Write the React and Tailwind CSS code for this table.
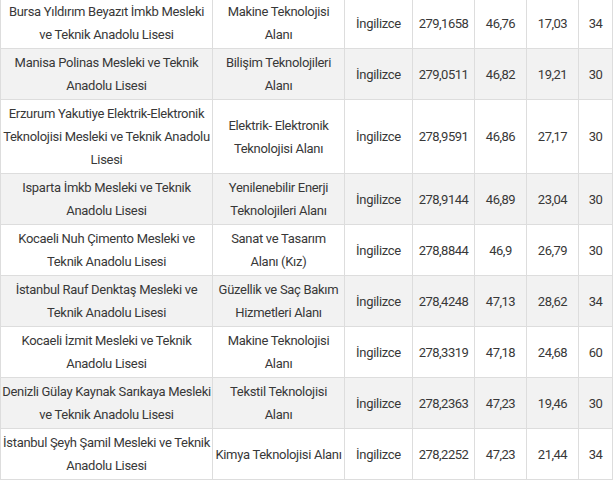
const rows = [
  [['Bursa Yıldırım Beyazıt İmkb Mesleki', 've Teknik Anadolu Lisesi'], ['Makine Teknolojisi', 'Alanı'], '279,1658', '46,76', '17,03', '34'],
  [['Manisa Polinas Mesleki ve Teknik', 'Anadolu Lisesi'], ['Bilişim Teknolojileri', 'Alanı'], '279,0511', '46,82', '19,21', '30'],
  [['Erzurum Yakutiye Elektrik-Elektronik', 'Teknolojisi Mesleki ve Teknik Anadolu', 'Lisesi'], ['Elektrik- Elektronik', 'Teknolojisi Alanı'], '278,9591', '46,86', '27,17', '30'],
  [['Isparta İmkb Mesleki ve Teknik', 'Anadolu Lisesi'], ['Yenilenebilir Enerji', 'Teknolojileri Alanı'], '278,9144', '46,89', '23,04', '30'],
  [['Kocaeli Nuh Çimento Mesleki ve', 'Teknik Anadolu Lisesi'], ['Sanat ve Tasarım', 'Alanı (Kız)'], '278,8844', '46,9', '26,79', '30'],
  [['İstanbul Rauf Denktaş Mesleki ve', 'Teknik Anadolu Lisesi'], ['Güzellik ve Saç Bakım', 'Hizmetleri Alanı'], '278,4248', '47,13', '28,62', '34'],
  [['Kocaeli İzmit Mesleki ve Teknik', 'Anadolu Lisesi'], ['Makine Teknolojisi', 'Alanı'], '278,3319', '47,18', '24,68', '60'],
  [['Denizli Gülay Kaynak Sarıkaya Mesleki', 've Teknik Anadolu Lisesi'], ['Tekstil Teknolojisi', 'Alanı'], '278,2363', '47,23', '19,46', '30'],
  [['İstanbul Şeyh Şamil Mesleki ve Teknik', 'Anadolu Lisesi'], ['Kimya Teknolojisi Alanı'], '278,2252', '47,23', '21,44', '34'],
];

const Lines = ({ lines }) => (
  <>
    {lines.map((l, i) => (
      <div key={i} className="whitespace-nowrap">{l}</div>
    ))}
  </>
);

export default function App() {
  const td = 'border border-[#dddddd] text-center align-middle py-[2px] px-0 tracking-[-0.3px]';
  const num = 'border border-[#dddddd] text-center align-middle py-[2px] px-0 tracking-[-0.5px]';
  return (
    <div className="w-[614px] h-[483px] overflow-hidden bg-white">
      <table
        className="-mt-[3px] w-[613px] border-collapse table-fixed text-[13px] leading-[23px] text-[#383838]"
        style={{ fontFamily: 'Roboto, "Noto Sans", sans-serif' }}
      >
        <colgroup>
          <col className="w-[212px]" />
          <col className="w-[132px]" />
          <col className="w-[68px]" />
          <col className="w-[62px]" />
          <col className="w-[52px]" />
          <col className="w-[52px]" />
          <col className="w-[34px]" />
        </colgroup>
        <tbody>
          {rows.map((r, i) => (
            <tr key={i} className={i % 2 === 1 ? 'bg-[#f2f2f2]' : 'bg-white'}>
              <td className={td}><Lines lines={r[0]} /></td>
              <td className={td}><Lines lines={r[1]} /></td>
              <td className={td}>İngilizce</td>
              <td className={num}>{r[2]}</td>
              <td className={num}>{r[3]}</td>
              <td className={num}>{r[4]}</td>
              <td className={num}>{r[5]}</td>
            </tr>
          ))}
        </tbody>
      </table>
    </div>
  );
}
